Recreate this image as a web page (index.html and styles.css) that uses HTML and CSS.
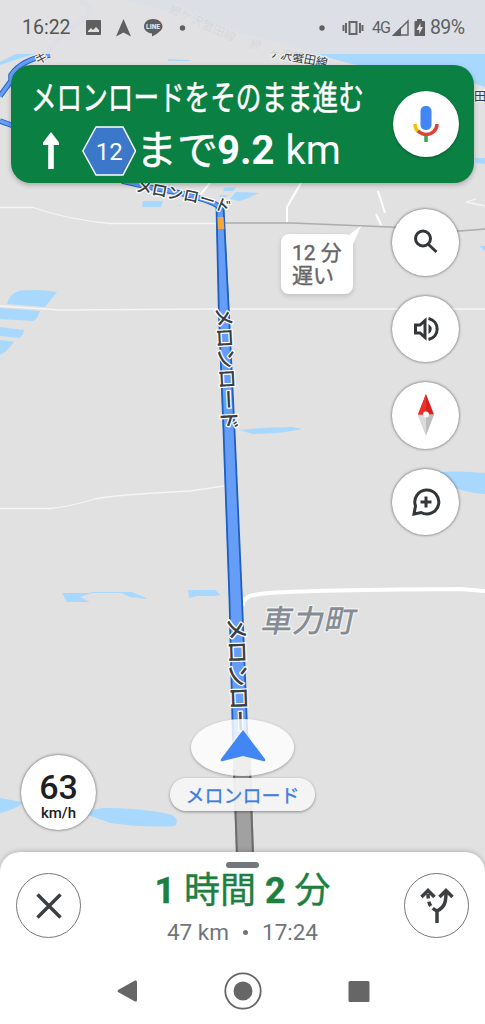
FILE: index.html
```html
<!DOCTYPE html>
<html lang="ja">
<head>
    <meta charset="UTF-8">
    <meta name="viewport" content="width=device-width, initial-scale=1.0">
    <title>ナビ - メロンロード</title>
    <link rel="stylesheet" href="styles.css">
</head>
<body>
    <div class="phone">
        <!-- Map -->
        <svg class="map" viewBox="0 0 485 860" width="485" height="860">
            <g class="water">
                <path d="M125 0H485V87L464 80L352 64L315 54L242 33Z"/>
                <path d="M0 62L16 54H34L12 61L0 65ZM168 59L190 60V61L168 61Z"/>
                <path d="M20 290.500Q40 289 57 292Q51 299 45 307L7 304Q9 294 20 290.500Z"/>
                <path d="M0 308L40 311Q37 320 33 321L0 319Z"/>
                <path d="M0 327L24 330Q23 336 19 338L0 336Z"/>
                <path d="M0 340L14 341.500Q8 351 0 355Z"/>
                <path d="M143 201H163L161 207H142ZM178 205L184 206H179Z"/>
                <path d="M224 188L236 187L233 191H223ZM220 195H228L225 198L219 197ZM230 199L236 192L259 193L248 198L240 201ZM475 158L485 158V164L476 163ZM479 246L485 246V251Z"/>
                <path d="M240 430Q265 427 292 427L302 429Q280 434 252 434Z"/>
                <path d="M430 473Q455 470 485 473V494Q460 492 450 485Z"/>
                <path d="M62 593H88L92 592H132L146 598V599L130 597L121 593H92L80 597L90 602H67Z"/>
                <path d="M188 590H215L221 595L215 596H197L189 598Z"/>
                <path d="M0 798L22 802Q20 808 0 813Z"/>
                <path d="M88 815Q92 807 110 808Q150 809 172 815Q180 819 175 826Q145 828 110 823Z"/>
            </g>
            <g class="street">
                <path d="M0 207.500H33Q70 220 110 223.500H217"/>
                <path d="M0 306L60 310L217 309M230 309H485"/>
                <path d="M0 508.500H50Q68 507 95 499Q112 495 190 491L224 486"/>
                <path d="M301 183L287 207V222M378 191L385 213M376 214L381 225M200 195L210 183" class="street-wide"/>
                <path d="M485 206L466 202L476 199"/>
                <path d="M243 606Q242 596 260 594Q290 590 460 589L485 591" class="street-main"/>
            </g>
            <path class="rail" d="M224 223H292L390 227L460 231L485 229"/>

            <path class="faint-route" d="M79 0Q100 10 80 22Q55 38 42 60"/>
            <path class="side-route-edge" d="M50 55Q22 59 11 75V81L0 96M0 121L14 126"/>
            <path class="side-route" d="M50 55Q22 59 11 75V81L0 96M0 121L14 126"/>
            <path class="side-route-edge" d="M122 181Q150 188 180 193Q210 200 220 207"/>
            <path class="side-route" d="M122 181Q150 188 180 193Q210 200 220 207"/>

            <path class="travelled" d="M232 735H250L254 855H236Z"/>
            <path class="travelled-edge" d="M234 770L237 855M250 770L253 855"/>
            <path class="route" d="M216 206L224 206L229.500 310L234.500 430L242 600L248 740H232.500L229 600L223 430L218.500 310Z"/>
            <path class="route-edge" d="M216.500 207L218.800 310L223.500 430L229.500 600L233 740M223.500 207L228.700 310L234.500 430L242 600L247.500 740"/>
            <path class="traffic" d="M217.500 217H223.500L224.300 229H218Z"/>

            <path id="bend" d="M135 191Q160 197 182 200Q206 204 226 213" fill="none"/>
            <text class="road-label label-small"><textPath href="#bend">メロンロード</textPath></text>
            <text class="road-label label-mid" transform="translate(216 307.500) rotate(87)">メロンロード</text>
            <text class="road-label label-near" transform="translate(228 618) rotate(88)">メロンロー</text>
            <text class="rail-label" transform="translate(268 56) rotate(11)">ヶ沢蟹田線</text>
            <text class="rail-label faded" transform="translate(168 12) rotate(25)">鰺ケ沢蟹田線</text>
            <text class="rail-label faded" transform="translate(249 48) rotate(10)">鰺</text>
            <text class="rail-label" transform="translate(474 101)">田</text>
            <text class="rail-label" transform="translate(37 64) rotate(-18)">ギ</text>
            <text class="town" transform="translate(260 632) skewX(-12)" textLength="94">車力町</text>
        </svg>

        <header class="status">
            <span class="clock">16:22</span>
            <svg class="status-left" width="110" height="20" viewBox="0 0 110 20">
                <path fill-rule="evenodd" d="M5 2H16Q17 2 17 3V16Q17 17 16 17H3Q2 17 2 16V3Q2 2 3 2ZM4 14H15V12L12 9L9 12L7 10L4 13Z"/>
                <path d="M39.500 1L47 18.500L39.500 14.500L32 18.500Z"/>
                <path d="M69 1C63.500 1 60 4.500 60 8.500C60 12.500 63.500 15 68 15.500V18.500C73 16 78.500 12.500 78.500 8.500C78.500 4.500 74.500 1 69 1Z"/>
                <text x="62" y="10.800" textLength="14">LINE</text>
                <circle cx="98.500" cy="10" r="2.700"/>
            </svg>
            <svg class="status-vibrate" width="50" height="20" viewBox="0 0 50 20">
                <circle cx="4" cy="10" r="2.700"/>
                <path fill="none" stroke="#666" stroke-width="2" d="M31.500 4H38.500V16H31.500ZM28 5V15M25.500 7V13M42 5V15M44.500 7V13"/>
            </svg>
            <span class="network">4G</span>
            <svg class="status-battery" width="34" height="20" viewBox="0 0 34 20">
                <path fill="none" stroke="#666" stroke-width="1.500" d="M2 17L16 3V17Z"/>
                <path d="M0 18L9 9V18Z"/>
                <path d="M25 1H30V3H32Q33 3 33 4V18H22.500V4Q22.500 3 23.500 3H25Z"/>
                <path fill="#e1e1e3" d="M28.500 5L24.500 12H27.200V16L31 9H28.500Z"/>
            </svg>
            <span class="percent">89%</span>
        </header>

        <section class="banner">
            <div class="directions">
                <h1><span>メロンロードをそのまま進む</span></h1>
                <div class="next">
                    <svg class="arrow" width="18" height="38" viewBox="0 0 18 38">
                        <path d="M9 0L17 10.500V13H11.800V37H6.200V13H1V10.500Z"/>
                    </svg>
                    <svg class="shield" width="54" height="50" viewBox="0 0 54 50">
                        <path d="M14 1H41L53.500 25L41 49H14L.800 25Z"/>
                        <text x="27.300" y="33.500">12</text>
                    </svg>
                    <span class="until">まで</span><strong>9.2</strong><span class="unit">km</span>
                </div>
            </div>
            <button class="mic" aria-label="音声">
                <svg width="26" height="36" viewBox="0 0 26 36">
                    <rect x="7.500" y="0" width="11" height="24" rx="5" fill="#4285f4"/>
                    <path d="M13 28V36" stroke="#34a853" stroke-width="3.500"/>
                    <path d="M2 18Q2 23.500 6 26" stroke="#fbbc04" stroke-width="3.500"/>
                    <path d="M5 25Q9 28.500 13 28.500C19 28.500 24 24 24 18" stroke="#db4437" stroke-width="3.500"/>
                </svg>
            </button>
        </section>

        <main class="map-controls">
            <div class="tools">
                <button class="round" aria-label="検索">
                    <svg width="30" height="30" viewBox="0 0 30 30"><circle cx="12" cy="11.500" r="7.500"/><path d="M17 17L25.500 25"/></svg>
                </button>
                <button class="round" aria-label="音量">
                    <svg width="30" height="30" viewBox="0 0 30 30"><path d="M4.500 11V19H9L14 23.500V6.500L9 11Z"/><path d="M17.500 4.500C29 7 29 23 17.500 25.500"/><path class="solid" d="M17.500 10Q24 15 17.500 20Z"/></svg>
                </button>
                <button class="round" aria-label="方位">
                    <svg class="compass" width="18" height="42" viewBox="0 0 18 42"><path fill="#d91f1c" d="M9 0L17 20.500H1Z"/><path fill="#ee302b" d="M9 0V20.500H1Z"/><path fill="#bdbdbd" d="M9 41.500L17 21H1Z"/><path fill="#dadada" d="M9 41.500V21H1Z"/><circle cx="9" cy="20.500" r="3" fill="#fff"/></svg>
                </button>
                <button class="round" aria-label="報告">
                    <svg width="30" height="30" viewBox="0 0 30 30"><path d="M3 27L4.500 19A12 12 0 1 1 10 25.500Z"/><path d="M15 9.500V20.500M9.500 15H20.500"/></svg>
                </button>
            </div>
        </main>

        <div class="delay">
            <svg width="20" height="20" viewBox="0 0 20 20"><path d="M0 12L16 0L8 18Z"/></svg>
            12 分<br>遅い
        </div>
        <div class="position">
            <svg width="48" height="34" viewBox="0 0 48 34"><path d="M24 1L46 30Q47 33 44 32L24 27L4 32Q1 33 2 30Z"/></svg>
        </div>
        <div class="current-road">メロンロード</div>
        <div class="speed"><b>63</b><span>km/h</span></div>

        <footer class="sheet">
            <i class="handle"></i>
            <div class="trip">
                <button class="outline" aria-label="閉じる">
                    <svg width="28" height="28" viewBox="0 0 28 28"><path d="M2.500 2.500L25.500 25.500M25.500 2.500L2.500 25.500"/></svg>
                </button>
                <div class="summary">
                    <div class="duration"><b>1</b> 時間 <b>2</b> 分</div>
                    <div class="arrival">47 km<i></i>17:24</div>
                </div>
                <button class="outline" aria-label="別のルート">
                    <svg width="34" height="36" viewBox="0 0 34 36"><path d="M17 35V22M17 23C25 19 26 14 26 4M19.500 9L26 2.500L32.500 9M1.500 9L8 2.500L14.500 9"/><path d="M17 23C9 19 8 14 8 4" stroke-dasharray="5 3"/></svg>
                </button>
            </div>
            <nav class="system">
                <svg width="38" height="38" viewBox="0 0 38 38"><path d="M10 18L27 8.500Q29 8 29 10V28Q29 30 27 29.500L10 20Q9 19 10 18Z"/></svg>
                <svg width="38" height="38" viewBox="0 0 38 38"><circle cx="19" cy="19" r="17.700" fill="none" stroke="#666" stroke-width="1.800"/><circle cx="19" cy="19" r="9.500"/></svg>
                <svg width="38" height="38" viewBox="0 0 38 38"><rect x="8.500" y="9" width="21" height="21" rx="1.500"/></svg>
            </nav>
        </footer>
    </div>
</body>
</html>
```
FILE: styles.css
```css
* {
    box-sizing: border-box;
    margin: 0;
    padding: 0;
}

body {
    background-color: #e1e1e1;
    font-family: Roboto, "Noto Sans CJK JP", sans-serif;
}

button {
    border: none;
    cursor: pointer;
}

.phone {
    position: relative;
    width: 485px;
    height: 1024px;
    overflow: hidden;
    display: flex;
    flex-direction: column;
}

/* Map */
.map {
    position: absolute;
    top: 0;
    left: 0;
    font-family: "Noto Sans CJK JP", sans-serif;
}

.water {
    fill: #a9d8ff;
}

.street path {
    fill: none;
    stroke: #f5f5f5;
    stroke-width: 1.3;
}

.street .street-wide {
    stroke: #fff;
    stroke-width: 2;
}

.street .street-main {
    stroke: #fff;
    stroke-width: 4;
}

.rail {
    fill: none;
    stroke: #adadad;
    stroke-width: 1.7;
}

.faint-route {
    fill: none;
    stroke: #b8cdee;
    stroke-width: 6;
}

.side-route-edge {
    fill: none;
    stroke: #2466c4;
    stroke-width: 5.5;
}

.side-route {
    fill: none;
    stroke: #669df6;
    stroke-width: 3.5;
}

.route {
    fill: #669df6;
}

.route-edge {
    fill: none;
    stroke: #1d60bf;
    stroke-width: 1.8;
}

.traffic {
    fill: #f5a83a;
}

.travelled {
    fill: #a1a1a1;
}

.travelled-edge {
    fill: none;
    stroke: #6b6b6b;
    stroke-width: 2;
}

.road-label,
.rail-label,
.town {
    fill: #3b3f44;
    stroke: #fff;
    stroke-width: 2.5px;
    stroke-linejoin: round;
    paint-order: stroke;
    font-weight: 500;
}

.label-small {
    font-size: 16px;
}

.label-mid {
    font-size: 20.5px;
}

.label-near {
    font-size: 23px;
}

.rail-label {
    font-size: 12px;
    font-weight: 400;
    stroke: #eee;
}

.faded {
    opacity: 0.6;
}

.town {
    font-size: 31px;
    fill: #868c94;
    stroke: #f3f3f3;
}

/* Status bar */
.status {
    position: relative;
    height: 54px;
    display: flex;
    align-items: center;
    padding: 1px 20px 0 22px;
    background-color: rgba(225, 225, 227, 0.9);
    color: #5f5f5f;
    font-size: 20px;
}

.status svg {
    flex-shrink: 0;
    fill: #5f5f5f;
}

.clock {
    width: 62px;
    font-size: 19.5px;
    color: #555;
}

.status-left text {
    font-size: 6.5px;
    font-weight: 900;
    fill: #e1e1e3;
}

.status-vibrate {
    margin-left: 124px;
}

.network {
    margin-left: 4px;
    width: 20px;
    font-size: 16px;
    letter-spacing: -1px;
}

.status-battery {
    margin-right: 4px;
}

.percent {
    font-size: 19.5px;
    letter-spacing: -0.6px;
}

/* Direction banner */
.banner {
    position: relative;
    display: flex;
    align-items: center;
    justify-content: space-between;
    width: 463px;
    height: 118px;
    margin: 11px 0 0 11px;
    padding: 0 15px 0 20px;
    border-radius: 20px;
    background-color: #0b8043;
    box-shadow: 0 2px 5px rgba(0, 0, 0, 0.25);
    color: #fff;
}

.directions {
    width: 340px;
    height: 118px;
}

.directions h1 {
    height: 59px;
    padding-top: 8px;
    font-family: "Noto Sans CJK JP", sans-serif;
    font-size: 34px;
    line-height: 46px;
    font-weight: 400;
    white-space: nowrap;
    -webkit-text-stroke: 0.5px #fff;
}

.directions h1 span {
    display: inline-block;
    transform: scaleX(0.753);
    transform-origin: left;
}

.next {
    display: flex;
    align-items: center;
    height: 54px;
    padding-left: 11px;
    font-size: 40px;
    line-height: 54px;
    white-space: nowrap;
}

.arrow {
    fill: #fff;
}

.shield {
    margin-left: 22px;
    fill: #3b78c9;
    stroke: #fff;
    stroke-width: 1.5;
}

.shield text {
    font-family: Roboto, sans-serif;
    font-size: 24px;
    text-anchor: middle;
    fill: #fff;
    stroke: none;
}

.until {
    width: 81px;
    font-size: 41px;
    -webkit-text-stroke: 0.4px #fff;
}

.unit {
    margin-left: 11px;
}

.mic {
    display: flex;
    align-items: center;
    justify-content: center;
    width: 66px;
    height: 66px;
    border-radius: 50%;
    background-color: #fff;
    box-shadow: 0 1px 3px rgba(0, 0, 0, 0.3);
}

.mic path {
    fill: none;
}

/* Map buttons */
.map-controls {
    position: relative;
    flex: 1;
    padding: 26px 26px 0 0;
}

.tools {
    display: flex;
    flex-direction: column;
    align-items: flex-end;
    gap: 20px;
}

.round {
    display: flex;
    align-items: center;
    justify-content: center;
    width: 67px;
    height: 66.5px;
    border-radius: 50%;
    background-color: #fff;
    box-shadow: 0 0 3px rgba(0, 0, 0, 0.65);
}

.round svg {
    fill: none;
    stroke: #333638;
    stroke-width: 3;
}

.round .solid {
    fill: #333638;
    stroke: none;
}

.round .compass {
    stroke: none;
}

.delay {
    position: absolute;
    left: 281px;
    top: 234px;
    width: 72px;
    height: 60px;
    padding: 8px 0 0 11px;
    border-radius: 8px;
    background-color: #fff;
    box-shadow: 0 2px 5px rgba(0, 0, 0, 0.15);
    color: #666;
    font-size: 21px;
    line-height: 23px;
    -webkit-text-stroke: 0.4px #666;
}

.delay svg {
    position: absolute;
    right: -12px;
    top: -8px;
    fill: #fff;
}

.position {
    position: absolute;
    left: 191px;
    top: 719px;
    width: 103px;
    height: 57px;
    padding-top: 10px;
    border-radius: 50%;
    background-color: rgba(255, 255, 255, 0.82);
    box-shadow: 0 1px 3px rgba(0, 0, 0, 0.3);
    text-align: center;
}

.position svg {
    fill: #4285f4;
}

.current-road {
    position: absolute;
    left: 170px;
    top: 778px;
    width: 145px;
    height: 33px;
    border-radius: 17px;
    background-color: rgba(245, 245, 245, 0.93);
    box-shadow: 0 1px 3px rgba(0, 0, 0, 0.4);
    color: #3f7de0;
    font-family: "Noto Sans CJK JP", sans-serif;
    font-size: 19px;
    line-height: 33px;
    text-align: center;
    -webkit-text-stroke: 0.3px #3f7de0;
}

.speed {
    position: absolute;
    left: 21px;
    top: 755px;
    width: 75px;
    height: 75px;
    display: flex;
    flex-direction: column;
    align-items: center;
    padding-top: 15px;
    border-radius: 50%;
    background-color: #fff;
    box-shadow: 0 0 3px rgba(0, 0, 0, 0.65);
    color: #202020;
}

.speed b {
    font-size: 34px;
    line-height: 34px;
    font-weight: 500;
}

.speed span {
    font-size: 15px;
    line-height: 18px;
    font-weight: 500;
}

/* Bottom sheet */
.sheet {
    position: relative;
    height: 172px;
    padding-top: 10px;
    border-radius: 20px 20px 0 0;
    background-color: #fff;
    box-shadow: 0 -1px 5px rgba(0, 0, 0, 0.2);
}

.handle {
    display: block;
    width: 33px;
    height: 6px;
    margin: 0 auto;
    border-radius: 3px;
    background-color: #72777c;
}

.trip {
    display: flex;
    justify-content: space-between;
    padding: 5px 16px 0;
}

.outline {
    display: flex;
    align-items: center;
    justify-content: center;
    width: 65px;
    height: 65px;
    border: 1px solid #777;
    border-radius: 50%;
    background-color: #fff;
}

.outline svg {
    fill: none;
    stroke: #3c4043;
    stroke-width: 3.5;
}

.summary {
    height: 65px;
    text-align: center;
    white-space: nowrap;
}

.duration {
    height: 40px;
    color: #1e8040;
    font-size: 36px;
    line-height: 36px;
    -webkit-text-stroke: 0.4px #1e8040;
}

.arrival {
    height: 32px;
    color: #70757a;
    font-size: 22.5px;
    line-height: 38px;
}

.arrival i {
    display: inline-block;
    width: 5px;
    height: 5px;
    margin: 0 14px 5px;
    border-radius: 50%;
    background-color: #70757a;
}

.system {
    display: flex;
    justify-content: center;
    gap: 78px;
    padding-top: 34px;
}

.system svg {
    fill: #666;
}
```
